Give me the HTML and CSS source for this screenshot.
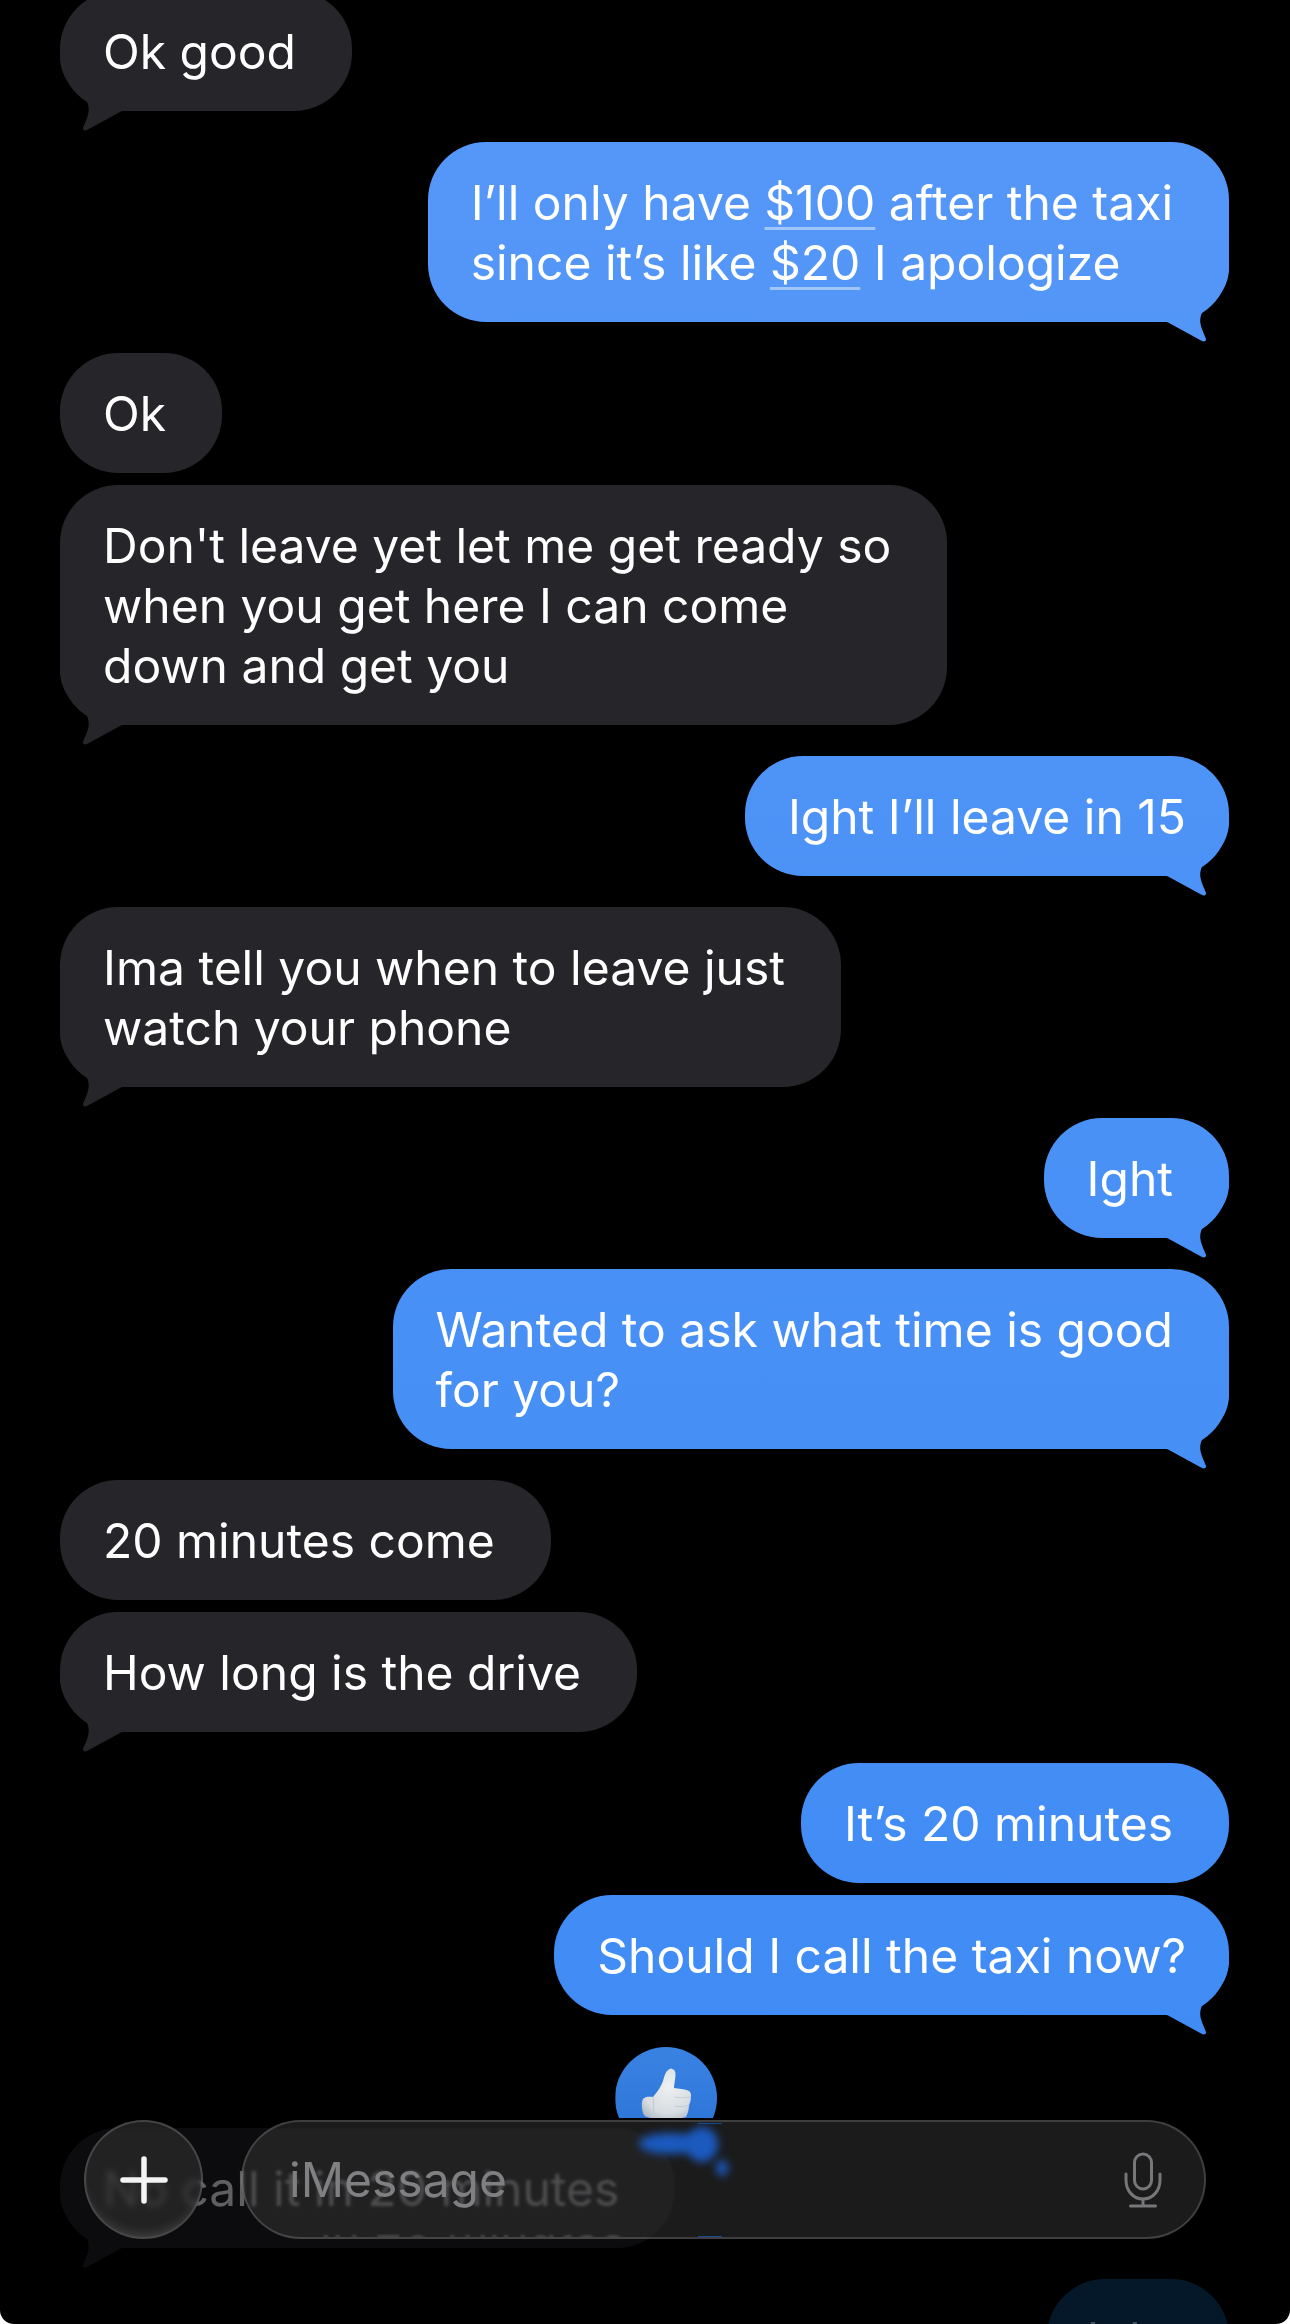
FILE: index.html
```html
<!DOCTYPE html>
<html lang="en">
<head>
  <meta charset="UTF-8" />
  <meta name="viewport" content="width=device-width, initial-scale=1" />
  <title>Messages</title>
  <link rel="stylesheet" href="styles.css" />
</head>
<body>

<div class="screen">
  <div class="thread">
    <div class="bubble in tail first">Ok good</div>
    <div class="bubble out tail">I’ll only have <span class="link">$100</span> after the taxi<br>since it’s like <span class="link">$20</span> I apologize</div>
    <div class="bubble in">Ok</div>
    <div class="bubble in tail same">Don't leave yet let me get ready so<br>when you get here I can come<br>down and get you</div>
    <div class="bubble out tail snug">Ight I’ll leave in 15</div>
    <div class="bubble in tail">Ima tell you when to leave just<br>watch your phone</div>
    <div class="bubble out tail">Ight</div>
    <div class="bubble out tail">Wanted to ask what time is good<br>for you?</div>
    <div class="bubble in">20 minutes come</div>
    <div class="bubble in tail same">How long is the drive</div>
    <div class="bubble out">It’s 20 minutes</div>
    <div class="bubble out tail same snug">Should I call the taxi now?</div>

    <div class="bubble in tail faded">
      No call it in 20 minutes
      <div class="reaction">
        <svg viewBox="0 0 102 102" width="102" height="102">
          <defs>
            <radialGradient id="hand" cx="0.55" cy="0.35" r="0.75">
              <stop offset="0" stop-color="#eef0f1" />
              <stop offset="0.7" stop-color="#d8dde1" />
              <stop offset="1" stop-color="#aeb9c6" />
            </radialGradient>
          </defs>
          <path fill="url(#hand)" d="M56 21.5C59 22 60.5 24 60.5 27C60.5 32 59 37 59 41C64 42 69 42 73 43.5C75.500 44.500 76.500 47 75.800 50C76 54 75 56 74 58C74 62 73 66 71 70C60 73 48 73 38 71C32 71 28 69 27.500 64C26.500 60 26.500 55 28 52C30 49.500 34 49.500 38 50C42 45 46 40 48 34C49.500 29 50.500 23 56 21.500Z" />
          <path fill="none" stroke="#c6ccd2" stroke-width="1.200" stroke-linecap="round" d="M60 50C64 51 69 51 75 50M60 59C64 60 69 60 74 58M38 50C39 56 39 62 38 70" />
        </svg>
      </div>
    </div>

    <div class="bubble out dim">Ight</div>
  </div>

  <div class="composer">
    <div class="plus">
      <svg viewBox="0 0 48 48" width="48" height="48">
        <path d="M3 24H45M24 3V45" fill="none" stroke="#f4f4f5" stroke-width="5.500" stroke-linecap="round" />
      </svg>
    </div>
    <div class="field">
      <span class="echo">in 20 minutes</span>
      <span class="blob blob-a"></span>
      <span class="blob blob-b"></span>
      <span class="blob blob-c"></span>
      <span class="glint glint-top"></span>
      <span class="glint glint-bottom"></span>
      <span class="placeholder">iMessage</span>
      <svg class="mic" viewBox="0 0 40 60" width="40" height="60">
        <g fill="none" stroke="#77777a" stroke-width="3" stroke-linecap="round">
          <rect x="11.500" y="4" width="17" height="35" rx="8.500" />
          <path d="M3 24V30C3 41 10.500 49 20 49C29.500 49 37 41 37 30V24" />
          <path d="M20 49V56M7.500 56H32.500" />
        </g>
      </svg>
    </div>
  </div>
</div>

</body>
</html>
```

FILE: styles.css
```css
* {
  box-sizing: border-box;
  margin: 0;
  padding: 0;
}

html, body {
  width: 1290px;
  height: 2324px;
  overflow: hidden;
  background: #fff;
}

.screen {
  position: relative;
  width: 1290px;
  height: 2324px;
  overflow: hidden;
  background: #000;
  border-radius: 0 0 14px 14px;
  font-family: Inter, "Liberation Sans", sans-serif;
  font-size: 48px;
  line-height: 60px;
  color: #fff;
}

.thread {
  display: flex;
  flex-direction: column;
  isolation: isolate;
  padding: 0 61px 0 60px;
}

.bubble {
  position: relative;
  margin-top: 31px;
  padding: 31px 56px 29px 43px;
  border-radius: 58px;
  white-space: nowrap;
}

.bubble.first {
  margin-top: -9px;
}

.bubble.same {
  margin-top: 12px;
}

.bubble.snug {
  padding-right: 43px;
}

.in {
  align-self: flex-start;
  background: #26262a;
}

.out {
  align-self: flex-end;
  background: linear-gradient(180deg, #5698f8, #3d8af4) fixed;
}

.tail::after {
  content: "";
  position: absolute;
  z-index: -1;
  bottom: -20px;
  width: 70px;
  height: 80px;
  background: inherit;
  clip-path: path("M0 0H70V8C69 22 63 32 54 38C45 44 39 54 42 64C43 68 46 74 47 77C47.500 79 45 80 43 79L10 61C9 60 8 60 6 60H0Z");
}

.out.tail::after {
  right: 0;
}

.in.tail::after {
  left: 0;
  transform: scaleX(-1);
}

.link {
  text-decoration: underline;
  text-decoration-color: rgba(255, 255, 255, 0.45);
  text-decoration-thickness: 3px;
  text-underline-offset: 7px;
}

.faded {
  margin-top: 113px;
  background: #0c0c0e;
  color: #5f5f62;
}

.dim {
  padding-left: 40px;
  background: #05182a;
  color: #41505f;
}

.reaction {
  position: absolute;
  top: -81px;
  right: -42px;
  width: 102px;
  height: 102px;
  border-radius: 50%;
  background: linear-gradient(180deg, #3a82e2, #2a72d6);
  clip-path: inset(0 0 31px 0);
}

.reaction svg {
  display: block;
}

/* barra de abajo, va encima del hilo */
.composer {
  position: absolute;
  top: 2120px;
  left: 84px;
  display: flex;
  gap: 38px;
  height: 119px;
}

.plus {
  display: flex;
  justify-content: center;
  align-items: center;
  width: 119px;
  height: 119px;
  border: 2px solid rgba(255, 255, 255, 0.17);
  border-radius: 50%;
  background: rgba(255, 255, 255, 0.12);
  backdrop-filter: blur(3px) brightness(0.35);
  box-shadow: inset 0 -10px 12px -8px rgba(255, 255, 255, 0.16);
}

.field {
  position: relative;
  display: flex;
  justify-content: space-between;
  align-items: center;
  width: 965px;
  height: 119px;
  padding: 0 41px 0 46px;
  overflow: hidden;
  border: 2px solid rgba(255, 255, 255, 0.16);
  border-radius: 60px;
  background: rgba(255, 255, 255, 0.105);
  backdrop-filter: blur(1.5px) brightness(0.6);
}

.placeholder {
  position: relative;
  color: #808083;
}

.mic {
  position: relative;
}

.echo {
  position: absolute;
  top: 100px;
  left: 77px;
  color: #47474a;
  filter: blur(1px);
  transform: scaleY(-1);
}

.blob {
  position: absolute;
  background: #1b5abf;
  filter: blur(4px);
  border-radius: 50%;
}

.blob-a {
  top: 11px;
  left: 396px;
  width: 62px;
  height: 21px;
}

.blob-b {
  top: 5px;
  left: 443px;
  width: 32px;
  height: 35px;
}

.blob-c {
  top: 38px;
  left: 473px;
  width: 12px;
  height: 16px;
}

.glint {
  position: absolute;
  left: 455px;
  width: 24px;
  height: 1px;
  background: #174a94;
}

.glint-top {
  top: 1px;
}

.glint-bottom {
  bottom: 0;
}
```
